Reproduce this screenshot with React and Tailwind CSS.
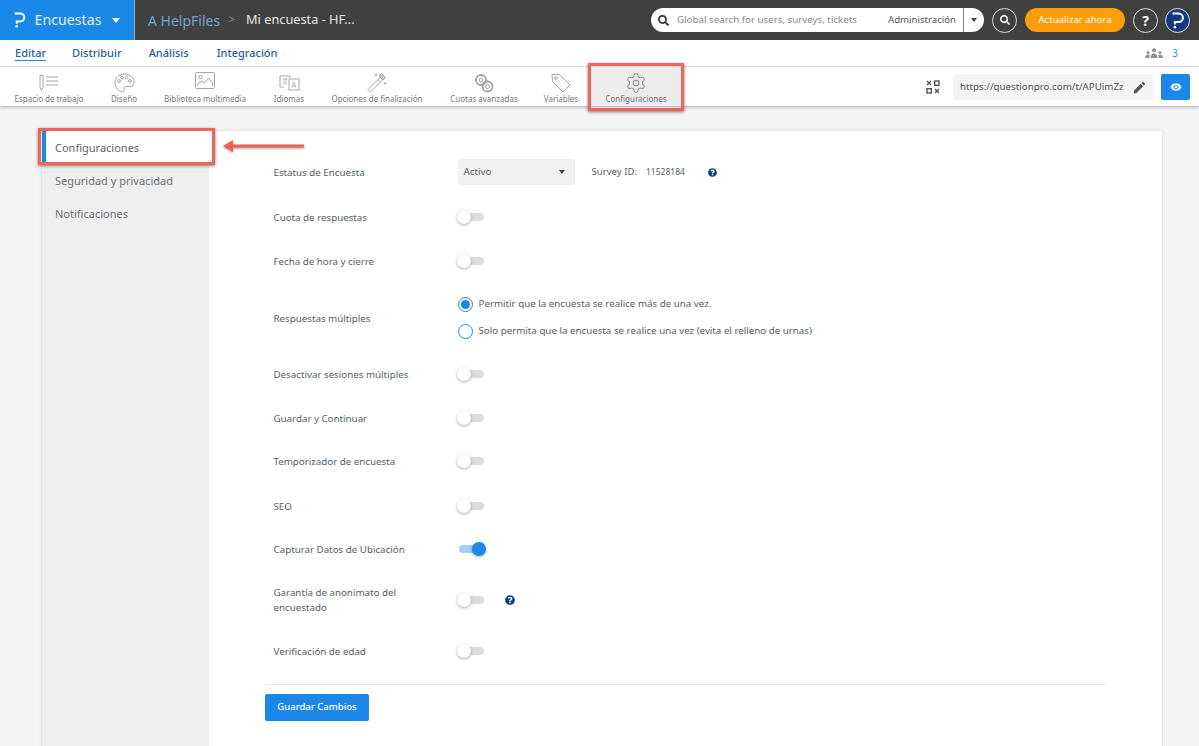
import React from "react";
import { MdEdit, MdVisibility } from "react-icons/md";
import { FaSearch, FaQuestionCircle } from "react-icons/fa";

const font = { fontFamily: '"Noto Sans", "Open Sans", sans-serif' };

const Logo = ({ c = "#fff", s = 14 }) => (
  <svg width={s * 0.72} height={s} viewBox="0 0 11 15" fill="none">
    <path d="M0.500 1.300H6a3.800 3.800 0 0 1 0 7.600H2.600V11.200" stroke={c} strokeWidth="1.800" />
    <circle cx="2.600" cy="13.500" r="1.200" fill={c} />
  </svg>
);

const ic = { fill: "none", stroke: "#a3a6aa", strokeWidth: 1 };

const IWork = () => (
  <svg width="20" height="18" viewBox="0 0 20 18" {...ic}>
    <path d="M1 1.500h3v12l-1.500 3-1.500-3z" />
    <path d="M7 3h12M7 7h12M7 11h12" />
  </svg>
);
const IPalette = () => (
  <svg width="21" height="20" viewBox="0 0 21 20" {...ic}>
    <path d="M10.500 1C5 1 1 4.600 1 9.500S5 19 8.500 19c2 0 2.300-1.500 1.700-2.700-.7-1.400.2-2.800 2-2.800h3.800c2.500 0 4-1.600 4-4C20 4.600 16 1 10.500 1z" />
    <circle cx="5" cy="8" r="1.400" /><circle cx="8" cy="4.600" r="1.400" /><circle cx="12.500" cy="4.600" r="1.400" /><circle cx="16" cy="8" r="1.400" />
  </svg>
);
const IImage = () => (
  <svg width="20" height="18" viewBox="0 0 20 18" {...ic} className="mt-[-3px]">
    <rect x="0.500" y="0.500" width="19" height="16" rx="1" />
    <circle cx="5.500" cy="5" r="1.700" />
    <path d="M2.500 14V12l4.500-3 2.500 2 4-5 4 5v3" />
  </svg>
);
const ILang = () => (
  <svg width="21" height="16" viewBox="0 0 21 16" {...ic}>
    <path d="M11 3V1H1v11h4" />
    <rect x="10" y="4" width="10" height="11" />
    <path d="M3.500 4h5M6 3v1M4 9.500c2-1 3-3 3.500-5.500M4.500 5.500c.5 2 2 3.500 3.500 4" strokeWidth="0.800" />
    <path d="M13 12.500l2-5.500 2 5.500M13.800 10.800h2.500" strokeWidth="0.800" />
  </svg>
);
const IWand = () => (
  <svg width="20" height="21" viewBox="0 0 20 21" {...ic}>
    <path d="M1 17.500L13 5.500l2.500 2.500L3.500 20z" />
    <path d="M11 7.500l2.500 2.500" />
    <path d="M14.500 1.500l4 4-2.500 2.500-4-4z" fill="#c5c7ca" />
    <path d="M9 1.500v3M7.500 3h3M18 10v3M16.500 11.500h3" strokeWidth="0.800" />
  </svg>
);
const IChain = () => (
  <svg width="20" height="20" viewBox="0 0 20 20" {...ic} stroke="#9fa2a6">
    <circle cx="7" cy="7" r="5" strokeWidth="1.800" />
    <circle cx="13.500" cy="13.500" r="5" strokeWidth="1.800" />
    <circle cx="7" cy="7" r="2" />
    <circle cx="13.500" cy="13.500" r="2" />
  </svg>
);
const ITag = () => (
  <svg width="20" height="20" viewBox="0 0 20 20" {...ic}>
    <path d="M1 1.500h7.500l10.500 10.500-7 7L1.500 8.500z" strokeLinejoin="round" />
    <circle cx="5" cy="5" r="1.300" />
  </svg>
);
const IGear = () => (
  <svg width="22" height="22" viewBox="0 0 24 24" fill="none" stroke="#8b8e92" strokeWidth="1.100" strokeLinejoin="round">
    <path d="M12.220 2h-.440a2 2 0 0 0-2 2v.180a2 2 0 0 1-1 1.730l-.430.250a2 2 0 0 1-2 0l-.150-.080a2 2 0 0 0-2.730.730l-.220.380a2 2 0 0 0 .730 2.730l.150.100a2 2 0 0 1 1 1.720v.510a2 2 0 0 1-1 1.740l-.150.090a2 2 0 0 0-.730 2.730l.220.380a2 2 0 0 0 2.730.730l.150-.080a2 2 0 0 1 2 0l.430.250a2 2 0 0 1 1 1.730V20a2 2 0 0 0 2 2h.440a2 2 0 0 0 2-2v-.180a2 2 0 0 1 1-1.730l.430-.250a2 2 0 0 1 2 0l.150.080a2 2 0 0 0 2.730-.730l.220-.390a2 2 0 0 0-.730-2.730l-.150-.080a2 2 0 0 1-1-1.740v-.500a2 2 0 0 1 1-1.740l.150-.090a2 2 0 0 0 .730-2.730l-.220-.380a2 2 0 0 0-2.730-.730l-.150.080a2 2 0 0 1-2 0l-.430-.250a2 2 0 0 1-1-1.730V4a2 2 0 0 0-2-2z" />
    <circle cx="12" cy="12" r="3" />
  </svg>
);
const IQr = () => (
  <svg width="14" height="14" viewBox="0 0 14 14" fill="none" stroke="#555" strokeWidth="1.400">
    <path d="M1 1l4 4M5 1L1 5" />
    <rect x="8.700" y="1" width="4.300" height="4.300" />
    <rect x="1" y="8.700" width="4.300" height="4.300" />
    <path d="M9 9l4 4M13 9l-4 4" />
  </svg>
);
const IUsers = () => (
  <svg width="18" height="11" viewBox="0 0 18 11" fill="#8f9296">
    <circle cx="9" cy="2.300" r="2" /><path d="M5.500 10c0-3 1.500-4.500 3.500-4.500s3.500 1.500 3.500 4.500z" />
    <circle cx="3" cy="4.500" r="1.500" /><path d="M0 10c0-2 1.200-3.500 3-3.500.8 0 1.400.3 1.800.7-.4.800-.6 1.700-.6 2.800z" />
    <circle cx="15" cy="4.500" r="1.500" /><path d="M18 10c0-2-1.200-3.500-3-3.500-.8 0-1.400.3-1.800.7.4.800.6 1.700.6 2.800z" />
  </svg>
);

const tools = [
  ["Espacio de trabajo", IWork, "w-[98px]"],
  ["Diseño", IPalette, "w-[52px]"],
  ["Biblioteca multimedia", IImage, "w-[110px]"],
  ["Idiomas", ILang, "w-[58px]"],
  ["Opciones de finalización", IWand, "w-[118px]"],
  ["Cuotas avanzadas", IChain, "w-[96px]"],
  ["Variables", ITag, "w-[58px]"],
];

const Tool = ({ label, Icon, w, active }) => (
  <div className={`${w} h-full flex flex-col items-center ${active ? "bg-[#ececec]" : ""}`}>
    <div className="h-[28px] flex items-center justify-center pt-[3px]"><Icon /></div>
    <span className="text-[8px] leading-[10px] text-[#75787c] mt-[-1px] whitespace-nowrap">{label}</span>
  </div>
);

const Toggle = ({ on }) => (
  <div className={`relative w-[27px] h-[14px] flex items-center ${on ? "ml-[2px]" : ""}`}>
    <div className={`w-[25px] h-[8px] rounded-full ${on ? "bg-[#a3cdf5]" : "ml-[2px] bg-[#dcdcdc]"}`} />
    <div className={`absolute top-0 w-[14px] h-[14px] rounded-full ${on ? "right-0 bg-[#1b87e6]" : "left-0 bg-white"} shadow-[0_1px_3px_rgba(0,0,0,0.35)]`} />
  </div>
);

const Help = ({ size = 9 }) => <FaQuestionCircle size={size} color="#063c8c" />;

const Label = ({ children }) => (
  <div className="w-[183px] ml-[0.500px] shrink-0 text-[9.750px] leading-[15px] text-[#545e6b]">{children}</div>
);

const Row = ({ h, label, children }) => (
  <div className={`${h} flex items-center`}>
    <Label>{label}</Label>
    {children}
  </div>
);

const Radio = ({ on, label }) => (
  <div className="flex items-center gap-[6px] h-[27px]">
    <div className="w-[15px] h-[15px] rounded-full border border-[#1b87e6] flex items-center justify-center">
      {on && <div className="w-[9px] h-[9px] rounded-full bg-[#1b87e6]" />}
    </div>
    <span className="text-[9.750px] text-[#545e6b] whitespace-nowrap">{label}</span>
  </div>
);

export default function App() {
  return (
    <div style={font} className="relative w-[1199px] h-[746px] overflow-hidden bg-[#f4f4f4]">
      <header className="h-[40px] bg-[#404040] flex items-center">
        <div className="w-[135px] h-full bg-[#1b87e6] border-r border-[#8cb4d8] flex items-center pl-[14px]">
          <Logo s={16} />
          <span className="ml-[9px] text-[14.200px] text-[#e3f0fb]">Encuestas</span>
          <span className="ml-[11px] w-0 h-0 border-x-[4.500px] border-x-transparent border-t-[5px] border-t-white" />
        </div>
        <span className="ml-[13px] text-[14px] text-[#6fa6c8]">A HelpFiles</span>
        <span className="ml-[8px] text-[12px] text-[#8a8a8a]">&gt;</span>
        <span className="ml-[11px] text-[12.750px] text-[#e6e6e6]">Mi encuesta - HF...</span>
        <div className="ml-auto flex items-center pr-[9px]">
          <div className="w-[333px] h-[24px] bg-white rounded-full flex items-center pl-[7px]">
            <FaSearch size={11} color="#333" />
            <span className="ml-[8px] text-[9.750px] text-[#8a8a8a] whitespace-nowrap">Global search for users, surveys, tickets</span>
            <span className="ml-auto text-[9.600px] text-[#555] whitespace-nowrap">Administración</span>
            <div className="ml-[7px] w-[21px] h-full border-l border-[#888] flex items-center justify-center">
              <span className="w-0 h-0 border-x-[3.500px] border-x-transparent border-t-[4px] border-t-[#444]" />
            </div>
          </div>
          <div className="ml-[8px] w-[25px] h-[25px] rounded-full border border-[#ddd] flex items-center justify-center">
            <FaSearch size={10} color="#fff" />
          </div>
          <div className="ml-[8px] w-[100px] h-[24px] rounded-full bg-[#ff9d0a] flex items-center justify-center text-[9.600px] text-[#fff]">Actualizar ahora</div>
          <div className="ml-[8px] w-[25px] h-[25px] rounded-full border border-[#ddd] flex items-center justify-center text-[14px] font-bold text-white">?</div>
          <div className="ml-[7px] w-[25px] h-[25px] rounded-full bg-[#14397f] border border-[#ddd] flex items-center justify-center pl-[2px]">
            <Logo s={17} />
          </div>
        </div>
      </header>

      <nav className="h-[27px] bg-white border-b border-[#e4e4e4] flex items-center pl-[15px] pr-[21px] text-[11px] font-medium text-[#2a5d9c]">
        <span className="border-b border-[#1b87e6] leading-[15px] text-[#1f5ba3]">Editar</span>
        <span className="ml-[26px]">Distribuir</span>
        <span className="ml-[27px]">Análisis</span>
        <span className="ml-[28px]">Integración</span>
        <div className="ml-auto flex items-center gap-[9px]">
          <IUsers />
          <span className="text-[10px] font-normal text-[#2f8fe6]">3</span>
        </div>
      </nav>

      <div className="relative z-10 h-[39px] bg-white shadow-[0_1px_3px_rgba(0,0,0,0.3)] flex items-center pr-[9px]">
        {tools.map(([l, I, w]) => <Tool key={l} label={l} Icon={I} w={w} />)}
        <Tool label="Configuraciones" Icon={IGear} w="w-[92px]" active />
        <div className="ml-auto mt-[1px] flex items-center">
          <IQr />
          <div className="ml-[13px] w-[200px] h-[26px] bg-[#f4f4f4] rounded-[2px] flex items-center pl-[7px] text-[9.750px] text-[#555] whitespace-nowrap">
            https://questionpro.com/t/APUimZz
            <MdEdit size={15} color="#555" className="ml-auto mr-[6px]" />
          </div>
          <div className="ml-[8px] w-[29px] h-[26px] bg-[#1b87e6] rounded-[2px] flex items-center justify-center">
            <MdVisibility size={12} color="#fff" />
          </div>
        </div>
      </div>

      <main className="flex ml-[42px] mr-[37px] mt-[25px] h-[640px] shadow-[0_0_3px_rgba(0,0,0,0.15)]">
        <aside className="w-[167px] bg-[#efefef] text-[11px] text-[#6b7178]">
          <div className="h-[33px]" />
          <div className="h-[34px] flex items-center pl-[13px]">Seguridad y privacidad</div>
          <div className="h-[33px] flex items-center pl-[13px]">Notificaciones</div>
        </aside>
        <section className="flex-1 bg-white pl-[56px] pt-[19px] pr-[57px]">
          <div className="pl-[8px]">
            <Row h="h-[44px]" label="Estatus de Encuesta">
              <div className="ml-[1px] w-[117px] h-[26px] bg-[#f1f1f1] rounded-[2px] flex items-center px-[6px] text-[9.750px] text-[#545e6b]">
                Activo
                <span className="ml-auto mr-[4px] w-0 h-0 border-x-[3.500px] border-x-transparent border-t-[4px] border-t-[#444]" />
              </div>
              <span className="ml-[17px] text-[9.600px] text-[#545e6b]">Survey ID:</span>
              <span className="ml-[9px] text-[8.500px] text-[#545e6b]">11528184</span>
              <span className="ml-[23px] flex"><Help /></span>
            </Row>
            <Row h="h-[46px]" label="Cuota de respuestas"><Toggle /></Row>
            <Row h="h-[42px]" label="Fecha de hora y cierre"><Toggle /></Row>
            <Row h="h-[72px]" label="Respuestas múltiples">
              <div className="ml-[1px] flex flex-col">
                <Radio on label="Permitir que la encuesta se realice más de una vez." />
                <Radio label="Solo permita que la encuesta se realice una vez (evita el relleno de urnas)" />
              </div>
            </Row>
            <Row h="h-[40px]" label="Desactivar sesiones múltiples"><Toggle /></Row>
            <Row h="h-[48px]" label="Guardar y Continuar"><Toggle /></Row>
            <Row h="h-[38px]" label="Temporizador de encuesta"><Toggle /></Row>
            <Row h="h-[52px]" label="SEO"><Toggle /></Row>
            <Row h="h-[34px]" label="Capturar Datos de Ubicación"><Toggle on /></Row>
            <Row h="h-[68px]" label={<span className="block w-[150px]">Garantía de anonimato del encuestado</span>}>
              <Toggle />
              <span className="ml-[21px] flex"><Help size={10} /></span>
            </Row>
            <Row h="h-[34px]" label="Verificación de edad"><Toggle /></Row>
          </div>
          <div className="mt-[16px] h-px bg-[#e4e4e4]" />
          <button className="mt-[9px] w-[104px] h-[27px] bg-[#1b87e6] rounded-[2px] text-[9.500px] font-medium text-white">Guardar Cambios</button>
        </section>
      </main>

      <div className="absolute z-20 left-[588px] top-[63px] w-[96px] h-[48px] border-[3px] border-[#f2635a] shadow-[0_1px_3px_rgba(0,0,0,0.5)]" />
      <div className="absolute z-20 left-[38px] top-[128px] w-[177px] h-[37px] border-[3px] border-[#f2635a] shadow-[0_1px_3px_rgba(0,0,0,0.5)]">
        <div className="absolute left-[1px] top-0 bottom-0 w-[4px] bg-[#1b87e6]" />
        <div className="absolute left-[5px] right-0 top-0 bottom-0 bg-white flex items-center pl-[9px] pt-[3px] text-[11px] text-[#5f6670]">Configuraciones</div>
      </div>
      <svg className="absolute z-20 left-[222px] top-[139px]" width="82" height="16" viewBox="0 0 82 16" style={{ filter: "drop-shadow(0 1px 1px rgba(0,0,0,0.4))" }}>
        <path d="M1 7l10-6v4.500h71v3H11V13z" fill="#f2635a" />
      </svg>
    </div>
  );
}
